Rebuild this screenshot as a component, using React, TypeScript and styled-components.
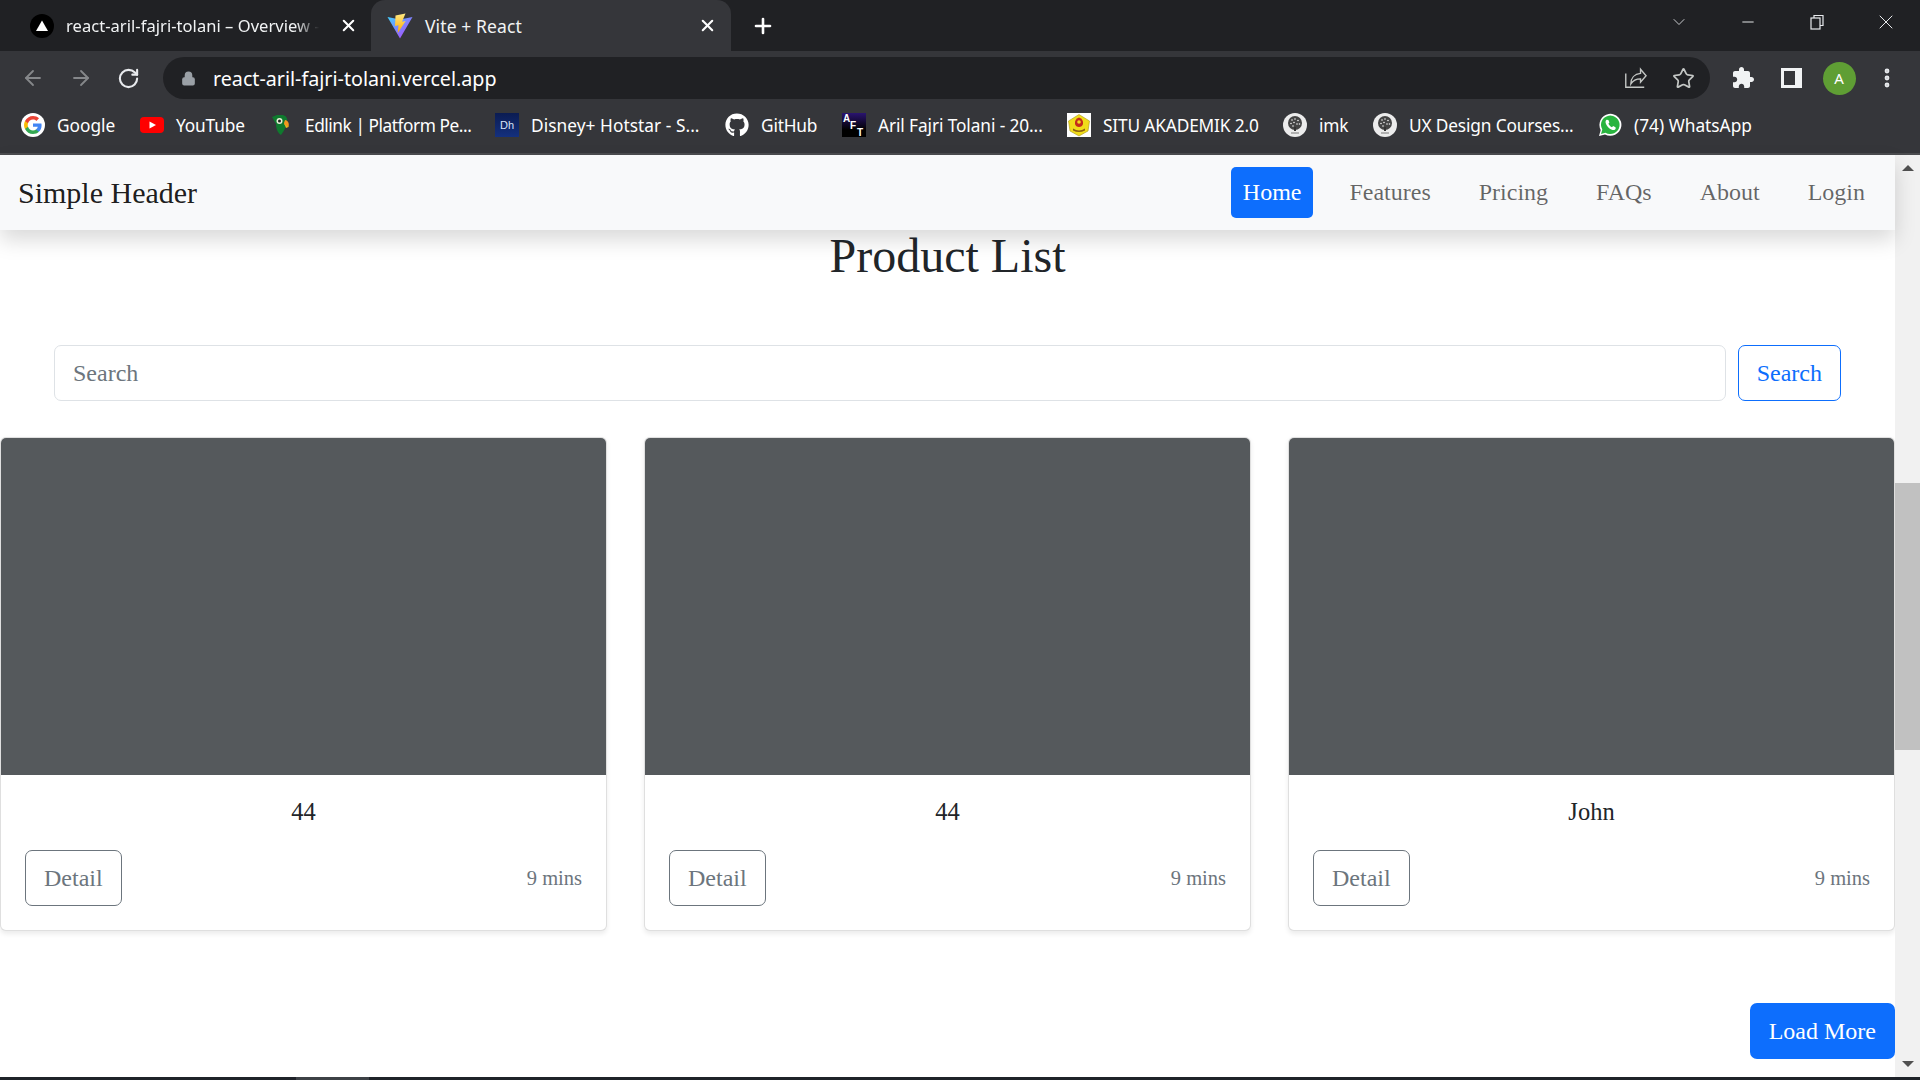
import React from 'react';
import styled, { createGlobalStyle } from 'styled-components';
import { ArrowLeft, ArrowRight, RotateCw, Lock, Star, X, Plus, ChevronDown, Minus, MoreVertical } from 'lucide-react';
import { FaGithub } from 'react-icons/fa';

const GlobalStyle = createGlobalStyle`
	html, body {
		margin: 0;
		padding: 0;
		height: 100%;
		overflow: hidden;
		background: #ffffff;
	}
	* {
		box-sizing: border-box;
	}
`;

const TreeBadge = () => (
	<svg width="24" height="24" viewBox="0 0 24 24">
		<circle cx="12" cy="12" r="12" fill="#ececec" />
		<circle cx="12" cy="10" r="7" fill="#444" />
		<g fill="#ececec">
			<circle cx="9" cy="7" r="0.8" />
			<circle cx="12" cy="6" r="0.8" />
			<circle cx="15" cy="7.500" r="0.8" />
			<circle cx="8" cy="10.500" r="0.8" />
			<circle cx="11" cy="9.500" r="0.8" />
			<circle cx="14" cy="11" r="0.8" />
			<circle cx="16.500" cy="11" r="0.8" />
			<circle cx="10" cy="13" r="0.8" />
		</g>
		<rect x="11" y="14" width="2" height="4" fill="#333" />
		<rect x="8" y="19.500" width="8" height="1" fill="#777" />
	</svg>
);

const GoogleIcon = () => (
	<svg width="24" height="24" viewBox="0 0 24 24">
		<circle cx="12" cy="12" r="12" fill="#fff" />
		<path fill="#4285F4" d="M20.600 12.200c0-.6-.1-1.200-.2-1.800H12v3.400h4.800c-.2 1.100-.8 2-1.800 2.700v2.200h2.900c1.700-1.500 2.700-3.800 2.700-6.500z" />
		<path fill="#34A853" d="M12 21c2.400 0 4.500-.8 5.900-2.200L15 16.500c-.8.500-1.800.9-3 .9-2.300 0-4.300-1.600-5-3.700H4v2.300C5.500 19 8.500 21 12 21z" />
		<path fill="#FBBC05" d="M7 13.700c-.4-1.100-.4-2.300 0-3.400V8H4c-1.300 2.500-1.300 5.500 0 8l3-2.300z" />
		<path fill="#EA4335" d="M12 6.600c1.300 0 2.500.5 3.400 1.300l2.600-2.600C16.400 3.900 14.300 3 12 3 8.500 3 5.500 5 4 8l3 2.300c.7-2.100 2.700-3.700 5-3.700z" />
	</svg>
);

const YoutubeIcon = () => (
	<svg width="24" height="24" viewBox="0 0 24 24">
		<rect x="0" y="4" width="24" height="16" rx="4" fill="#f00" />
		<path d="M9.500 8.500 16 12l-6.500 3.500z" fill="#fff" />
	</svg>
);

const EdlinkIcon = () => (
	<svg width="24" height="24" viewBox="0 0 24 24">
		<path d="M3 4 8 2h6c3 1 5 3 4 7-1 5-3 9-6 13-3-2-5-6-5-11z" fill="#0f7a2e" />
		<circle cx="10.500" cy="8" r="3" fill="#e8f0d8" />
		<circle cx="10.500" cy="8" r="1.500" fill="#222" />
		<path d="M16 7c3 .5 4.500 3 3.500 7-2 0-4.500-2-4.500-4z" fill="#f3971f" />
		<path d="M15 10c1 2 2.500 3 4.500 4l-2.500 1z" fill="#e2c21e" />
	</svg>
);

const DisneyIcon = () => (
	<svg width="24" height="24" viewBox="0 0 24 24">
		<defs>
			<linearGradient id="disneyBg" x1="0" y1="0" x2="0" y2="1">
				<stop offset="0" stopColor="#0b1c52" />
				<stop offset="1" stopColor="#14307e" />
			</linearGradient>
		</defs>
		<rect width="24" height="24" fill="url(#disneyBg)" />
		<text x="12" y="16" textAnchor="middle" fontFamily="Liberation Sans, sans-serif" fontSize="11" fill="#d8e2f5">Dh</text>
	</svg>
);

const AftIcon = () => (
	<svg width="24" height="24" viewBox="0 0 24 24">
		<defs>
			<linearGradient id="aftBg" x1="0" y1="0" x2="0" y2="1">
				<stop offset="0" stopColor="#2a1470" />
				<stop offset="0.7" stopColor="#000" />
			</linearGradient>
		</defs>
		<rect width="24" height="24" fill="url(#aftBg)" />
		<text fontFamily="Liberation Sans, sans-serif" fontWeight="700" fontSize="10" fill="#fff">
			<tspan x="1" y="9">A</tspan>
			<tspan x="8" y="16">F</tspan>
			<tspan x="15" y="23">T</tspan>
		</text>
	</svg>
);

const SituIcon = () => (
	<svg width="24" height="24" viewBox="0 0 24 24">
		<rect width="24" height="24" fill="#fff" />
		<path d="M12 1.500 22.500 8 21 18l-9 5-9-5L1.500 8z" fill="#f0dc1a" stroke="#a8951a" strokeWidth="0.6" />
		<path d="M12 4.500c3 1 4.500 3.500 4 6.500-.5 2-2 3-4 3s-3.500-1-4-3c-.5-3 1-5.500 4-6.500z" fill="#c42a1c" />
		<circle cx="12" cy="9" r="1.800" fill="#f0dc1a" />
		<path d="M6 15.500c4 2.500 8 2.500 12 0v2c-4 2-8 2-12 0z" fill="#8a5f12" />
	</svg>
);

const WhatsappIcon = () => (
	<svg width="24" height="24" viewBox="0 0 24 24">
		<path d="M1 23l1.700-6A11 11 0 1 1 7 21.400z" fill="#fff" />
		<path d="M3 21l1.300-4.400A9.300 9.300 0 1 1 7.500 19.800z" fill="#29b43f" />
		<path d="M8.500 6.800c-1.300 1-1.300 3 0 5.200 1.500 2.700 3.600 4.300 6 5 1.500.3 2.800-.2 3.200-1.500l-.2-1.300-2.400-1.200-1.100 1.200c-1.500-.6-2.900-2-3.600-3.500l1-1.100-1-2.500z" fill="#fff" />
	</svg>
);

// tracking evens out the width difference between the installed font and the browser UI font
const bookmarks = [
	{ label: 'Google', icon: <GoogleIcon />, width: 58, tracking: 0 },
	{ label: 'YouTube', icon: <YoutubeIcon />, width: 68, tracking: -0.15 },
	{ label: 'Edlink | Platform Pe...', icon: <EdlinkIcon />, width: 165, tracking: -0.45 },
	{ label: 'Disney+ Hotstar - S...', icon: <DisneyIcon />, width: 169, tracking: 0.05 },
	{ label: 'GitHub', icon: <FaGithub size={24} color="#ffffff" />, width: 56, tracking: -0.2 },
	{ label: 'Aril Fajri Tolani - 20...', icon: <AftIcon />, width: 164, tracking: -0.1 },
	{ label: 'SITU AKADEMIK 2.0', icon: <SituIcon />, width: 155, tracking: -0.15 },
	{ label: 'imk', icon: <TreeBadge />, width: 29, tracking: -0.15 },
	{ label: 'UX Design Courses...', icon: <TreeBadge />, width: 164, tracking: -0.15 },
	{ label: '(74) WhatsApp', icon: <WhatsappIcon />, width: 119, tracking: 0 },
];

const products = [
	{ id: 1, title: '44' },
	{ id: 2, title: '44' },
	{ id: 3, title: 'John' },
];

const navLinks = ['Features', 'Pricing', 'FAQs', 'About', 'Login'];

export default function App() {
	return (
		<Viewport>
			<GlobalStyle />
			<Browser>
				<TabStrip>
					<Tab>
						<TabIcon>
							<svg width="24" height="24" viewBox="0 0 24 24">
								<circle cx="12" cy="12" r="12" fill="#000" />
								<path d="M12 6.500 18 17H6z" fill="#fff" />
							</svg>
						</TabIcon>
						<FadedTitle>react-aril-fajri-tolani – Overview -</FadedTitle>
						<TabClose>
							<X size={19} strokeWidth={2.600} />
						</TabClose>
					</Tab>
					<ActiveTab>
						<TabIcon>
							<svg width="26" height="26" viewBox="0 0 26 26">
								<defs>
									<linearGradient id="viteA" x1="0" y1="0" x2="1" y2="1">
										<stop offset="0" stopColor="#41d1ff" />
										<stop offset="1" stopColor="#bd34fe" />
									</linearGradient>
									<linearGradient id="viteB" x1="0" y1="0" x2="0" y2="1">
										<stop offset="0" stopColor="#ffea83" />
										<stop offset="1" stopColor="#ffa800" />
									</linearGradient>
								</defs>
								<path d="M0.500 4 13 25.500 25.500 4 13 6.500z" fill="url(#viteA)" />
								<path d="M18.500 0.500 8.500 2.500 8 13l3.500-.8-.8 7.800 8-12-3.700.8z" fill="url(#viteB)" />
							</svg>
						</TabIcon>
						<ActiveTitle>Vite + React</ActiveTitle>
						<TabClose>
							<X size={19} strokeWidth={2.600} />
						</TabClose>
					</ActiveTab>
					<NewTab>
						<Plus size={24} strokeWidth={2.600} />
					</NewTab>
					<WindowControls>
						<WindowButton>
							<ChevronDown size={20} strokeWidth={1} />
						</WindowButton>
						<WindowButton>
							<Minus size={18} strokeWidth={1.300} />
						</WindowButton>
						<WindowButton>
							<svg width="16" height="17" viewBox="0 0 16 17" fill="none" stroke="#e8eaed" strokeWidth="1.200">
								<rect x="2" y="4" width="9" height="11" />
								<path d="M5 4V1.500h9v10h-3" />
							</svg>
						</WindowButton>
						<WindowButton>
							<X size={24} strokeWidth={1} />
						</WindowButton>
					</WindowControls>
				</TabStrip>
				<Toolbar>
					<NavIcon $muted>
						<ArrowLeft size={24} strokeWidth={1.800} />
					</NavIcon>
					<NavIcon $muted>
						<ArrowRight size={24} strokeWidth={1.800} />
					</NavIcon>
					<NavIcon>
						<RotateCw size={23} strokeWidth={2.200} />
					</NavIcon>
					<Omnibox>
						<LockIcon>
							<Lock size={15} fill="#9aa0a6" strokeWidth={2.200} />
						</LockIcon>
						<Url>react-aril-fajri-tolani.vercel.app</Url>
						<OmniAction>
							<svg width="26" height="24" viewBox="0 0 26 24" fill="none" stroke="#c4c7c5" strokeWidth="1.500">
								<path d="M3 7v15h20" />
								<path d="M19 2.500 25 9.500 19 16.500V13c-4.500 0-8 1.500-10.500 5.500 0-6.500 4-11 10.500-11.500z" />
							</svg>
						</OmniAction>
						<OmniAction>
							<Star size={23} strokeWidth={1.800} />
						</OmniAction>
					</Omnibox>
					<ToolbarActions>
						<ToolSlot>
							<svg width="24" height="24" viewBox="0 0 24 24">
								<path
									fill="#f1f3f4"
									d="M20.500 11H19V7c0-1.100-.9-2-2-2h-4V3.500C13 2.120 11.880 1 10.500 1S8 2.120 8 3.500V5H4c-1.100 0-1.990.9-1.990 2v3.800H3.500c1.490 0 2.700 1.210 2.700 2.700s-1.210 2.700-2.700 2.700H2V20c0 1.100.9 2 2 2h3.800v-1.500c0-1.490 1.210-2.700 2.700-2.700 1.490 0 2.700 1.210 2.700 2.700V22H17c1.100 0 2-.9 2-2v-4h1.500c1.380 0 2.500-1.120 2.500-2.500S21.880 11 20.500 11z"
								/>
							</svg>
						</ToolSlot>
						<ToolSlot>
							<svg width="21" height="20" viewBox="0 0 21 20">
								<path fillRule="evenodd" fill="#f1f3f4" d="M0 0h21v20H0zM3 3v14h11V3z" />
							</svg>
						</ToolSlot>
						<ToolSlot>
							<Avatar>A</Avatar>
						</ToolSlot>
						<ToolSlot>
							<MoreVertical size={24} strokeWidth={2.800} />
						</ToolSlot>
					</ToolbarActions>
				</Toolbar>
				<BookmarkBar>
					{bookmarks.map((bookmark) => (
						<Bookmark key={bookmark.label}>
							{bookmark.icon}
							<BookmarkLabel $width={bookmark.width} $tracking={bookmark.tracking}>
								{bookmark.label}
							</BookmarkLabel>
						</Bookmark>
					))}
				</BookmarkBar>
			</Browser>
			<Workspace>
				<Page>
					<Header>
						<Brand>Simple Header</Brand>
						<NavList>
							<HomeLink>Home</HomeLink>
							{navLinks.map((link) => (
								<NavLink key={link}>{link}</NavLink>
							))}
						</NavList>
					</Header>
					<Title>Product List</Title>
					<SearchRow>
						<SearchInput placeholder="Search" />
						<SearchButton>Search</SearchButton>
					</SearchRow>
					<CardGrid>
						{products.map((product) => (
							<Card key={product.id}>
								<CardImage />
								<CardBody>
									<CardTitle>{product.title}</CardTitle>
									<CardFooter>
										<DetailButton>Detail</DetailButton>
										<Duration>9 mins</Duration>
									</CardFooter>
								</CardBody>
							</Card>
						))}
					</CardGrid>
					<LoadRow>
						<LoadButton>Load More</LoadButton>
					</LoadRow>
				</Page>
				<Scrollbar>
					<ScrollArrow />
					<ScrollTrack>
						<ScrollThumb />
					</ScrollTrack>
					<ScrollArrow $down />
				</Scrollbar>
			</Workspace>
			<Taskbar>
				<TaskbarItem />
			</Taskbar>
		</Viewport>
	);
}

const Viewport = styled.div`
	width: 1920px;
	height: 1080px;
	display: flex;
	flex-direction: column;
	overflow: hidden;
`;

const Browser = styled.div`
	flex: none;
	background: #35363a;
	border-bottom: 2px solid #4b4c4f;
	font-family: 'Noto Sans', sans-serif;
	color: #e8eaed;
`;

const TabStrip = styled.div`
	height: 51px;
	background: #202124;
	display: flex;
	align-items: stretch;
`;

const Tab = styled.div`
	width: 371px;
	padding: 0 13px 0 30px;
	display: flex;
	align-items: center;
	gap: 12px;
	font-size: 16.500px;
`;

const ActiveTab = styled(Tab)`
	width: 360px;
	padding: 0 14px 0 16px;
	background: #35363a;
	border-radius: 14px 14px 0 0;
`;

const TabIcon = styled.span`
	display: flex;
	flex: none;
`;

const TabTitle = styled.span`
	flex: 1;
	min-width: 0;
	white-space: nowrap;
	color: #f1f3f4;
`;

const FadedTitle = styled(TabTitle)`
	letter-spacing: 0.05px;
	mask-image: linear-gradient(to right, #000 88%, transparent 97%);
`;

const ActiveTitle = styled(TabTitle)`
	font-size: 17.500px;
	letter-spacing: 0.1px;
`;

const TabClose = styled.span`
	display: flex;
	flex: none;
	color: #ffffff;
`;

const NewTab = styled.span`
	display: flex;
	align-items: center;
	margin-left: 20px;
	color: #ffffff;
`;

const WindowControls = styled.div`
	margin-left: auto;
	display: flex;
	align-items: center;
	padding: 0 0 7px;
`;

const WindowButton = styled.span`
	width: 69px;
	display: flex;
	justify-content: center;
	color: #e8eaed;
`;

const Toolbar = styled.div`
	height: 48px;
	padding: 6px 0 0 21px;
	display: flex;
	align-items: stretch;
`;

const NavIcon = styled.span<{ $muted?: boolean }>`
	width: 24px;
	margin-right: 24px;
	display: flex;
	align-items: center;
	color: ${({ $muted }) => ($muted ? '#85878a' : '#e8eaed')};
`;

const Omnibox = styled.div`
	width: 1547px;
	margin-left: -2px;
	padding: 0 14px 0 18px;
	background: #202124;
	border-radius: 21px;
	display: flex;
	align-items: center;
`;

const LockIcon = styled.span`
	display: flex;
	color: #9aa0a6;
`;

const Url = styled.span`
	margin-left: 17px;
	flex: 1;
	font-size: 19.700px;
	color: #ffffff;
`;

const OmniAction = styled.span`
	width: 24px;
	margin-left: 25px;
	display: flex;
	color: #c4c7c5;
`;

const ToolbarActions = styled.div`
	flex: 1;
	display: flex;
	align-items: center;
	padding-left: 9px;
`;

const ToolSlot = styled.span`
	width: 48px;
	display: flex;
	justify-content: center;
	color: #e8eaed;
`;

const Avatar = styled.span`
	width: 33px;
	height: 33px;
	border-radius: 50%;
	background: #5f9e34;
	color: #ffffff;
	font-size: 15px;
	display: flex;
	align-items: center;
	justify-content: center;
`;

const BookmarkBar = styled.div`
	height: 54px;
	padding: 0 0 2px 21px;
	display: flex;
	align-items: center;
	gap: 25px;
`;

const Bookmark = styled.div`
	display: flex;
	align-items: center;
	gap: 12px;
`;

const BookmarkLabel = styled.span<{ $width: number; $tracking: number }>`
	width: ${({ $width }) => $width}px;
	font-size: 17.300px;
	letter-spacing: ${({ $tracking }) => $tracking}px;
	color: #ffffff;
	white-space: nowrap;
`;

const Workspace = styled.div`
	flex: 1;
	min-height: 0;
	display: flex;
`;

const Page = styled.main`
	flex: 1;
	min-width: 0;
	display: flex;
	flex-direction: column;
	background: #ffffff;
	font-family: 'Liberation Serif', serif;
	color: #212529;
`;

const Header = styled.nav`
	position: relative;
	z-index: 1;
	height: 75px;
	flex: none;
	padding: 0 18px;
	display: flex;
	align-items: center;
	justify-content: space-between;
	background: #f8f9fa;
	box-shadow: 0 10px 20px rgba(0, 0, 0, 0.15);
`;

const Brand = styled.span`
	font-size: 30px;
	color: rgba(0, 0, 0, 0.9);
`;

const NavList = styled.div`
	display: flex;
	align-items: center;
`;

const NavLink = styled.a`
	height: 51px;
	padding: 0 12px;
	margin-left: 24px;
	display: flex;
	align-items: center;
	font-size: 24px;
	color: rgba(0, 0, 0, 0.6);
`;

const HomeLink = styled(NavLink)`
	margin-left: 0;
	background: #0d6efd;
	border-radius: 5px;
	color: #ffffff;
`;

const Title = styled.h1`
	margin: -4px 0 59px;
	height: 60px;
	font-size: 48px;
	line-height: 60px;
	font-weight: 400;
	text-align: center;
	color: #212529;
`;

const SearchRow = styled.div`
	padding: 0 54px;
	display: flex;
	gap: 12px;
`;

const SearchInput = styled.input`
	flex: 1;
	height: 56px;
	padding: 0 18px;
	border: 1px solid #dee2e6;
	border-radius: 7px;
	font-family: inherit;
	font-size: 24px;
	outline: none;
	&::placeholder {
		color: #6c757d;
		opacity: 1;
	}
`;

const OutlineButton = styled.button`
	height: 56px;
	padding: 0 18px;
	background: #ffffff;
	border-radius: 7px;
	font-family: inherit;
	font-size: 24px;
`;

const SearchButton = styled(OutlineButton)`
	border: 1px solid #0d6efd;
	color: #0d6efd;
`;

const CardGrid = styled.div`
	margin-top: 36px;
	display: grid;
	grid-template-columns: repeat(3, 1fr);
	column-gap: 37px;
`;

const Card = styled.article`
	border: 1px solid rgba(0, 0, 0, 0.125);
	border-radius: 6px;
	box-shadow: 0 2.500px 5px rgba(0, 0, 0, 0.08);
	overflow: hidden;
	background: #ffffff;
`;

const CardImage = styled.div`
	height: 337px;
	background: #55595c;
`;

const CardBody = styled.div`
	padding: 18px 24px 24px;
`;

const CardTitle = styled.div`
	height: 38px;
	margin-bottom: 19px;
	font-size: 24.500px;
	line-height: 38px;
	text-align: center;
`;

const CardFooter = styled.div`
	display: flex;
	align-items: center;
	justify-content: space-between;
`;

const DetailButton = styled(OutlineButton)`
	border: 1px solid #6c757d;
	color: #6c757d;
`;

const Duration = styled.small`
	font-size: 20.500px;
	color: #6c757d;
`;

const LoadRow = styled.div`
	margin-top: 72px;
	display: flex;
	justify-content: flex-end;
`;

const LoadButton = styled.button`
	height: 56px;
	padding: 0 19px;
	background: #0d6efd;
	border: none;
	border-radius: 7px;
	color: #ffffff;
	font-family: inherit;
	font-size: 24px;
`;

const Scrollbar = styled.div`
	width: 25px;
	flex: none;
	background: #f1f1f1;
	display: flex;
	flex-direction: column;
`;

const ScrollArrow = styled.span<{ $down?: boolean }>`
	height: 26px;
	flex: none;
	display: flex;
	align-items: center;
	justify-content: center;
	&::before {
		content: '';
		border-left: 6px solid transparent;
		border-right: 6px solid transparent;
		${({ $down }) => ($down ? 'border-top: 6px solid #505050;' : 'border-bottom: 6px solid #505050;')}
	}
`;

const ScrollTrack = styled.div`
	flex: 1;
	padding-top: 302px;
`;

const ScrollThumb = styled.div`
	height: 267px;
	background: #c1c1c1;
`;

const Taskbar = styled.div`
	height: 3px;
	flex: none;
	padding-left: 296px;
	background: #1f2329;
`;

const TaskbarItem = styled.div`
	width: 73px;
	height: 100%;
	background: #3d4146;
`;
